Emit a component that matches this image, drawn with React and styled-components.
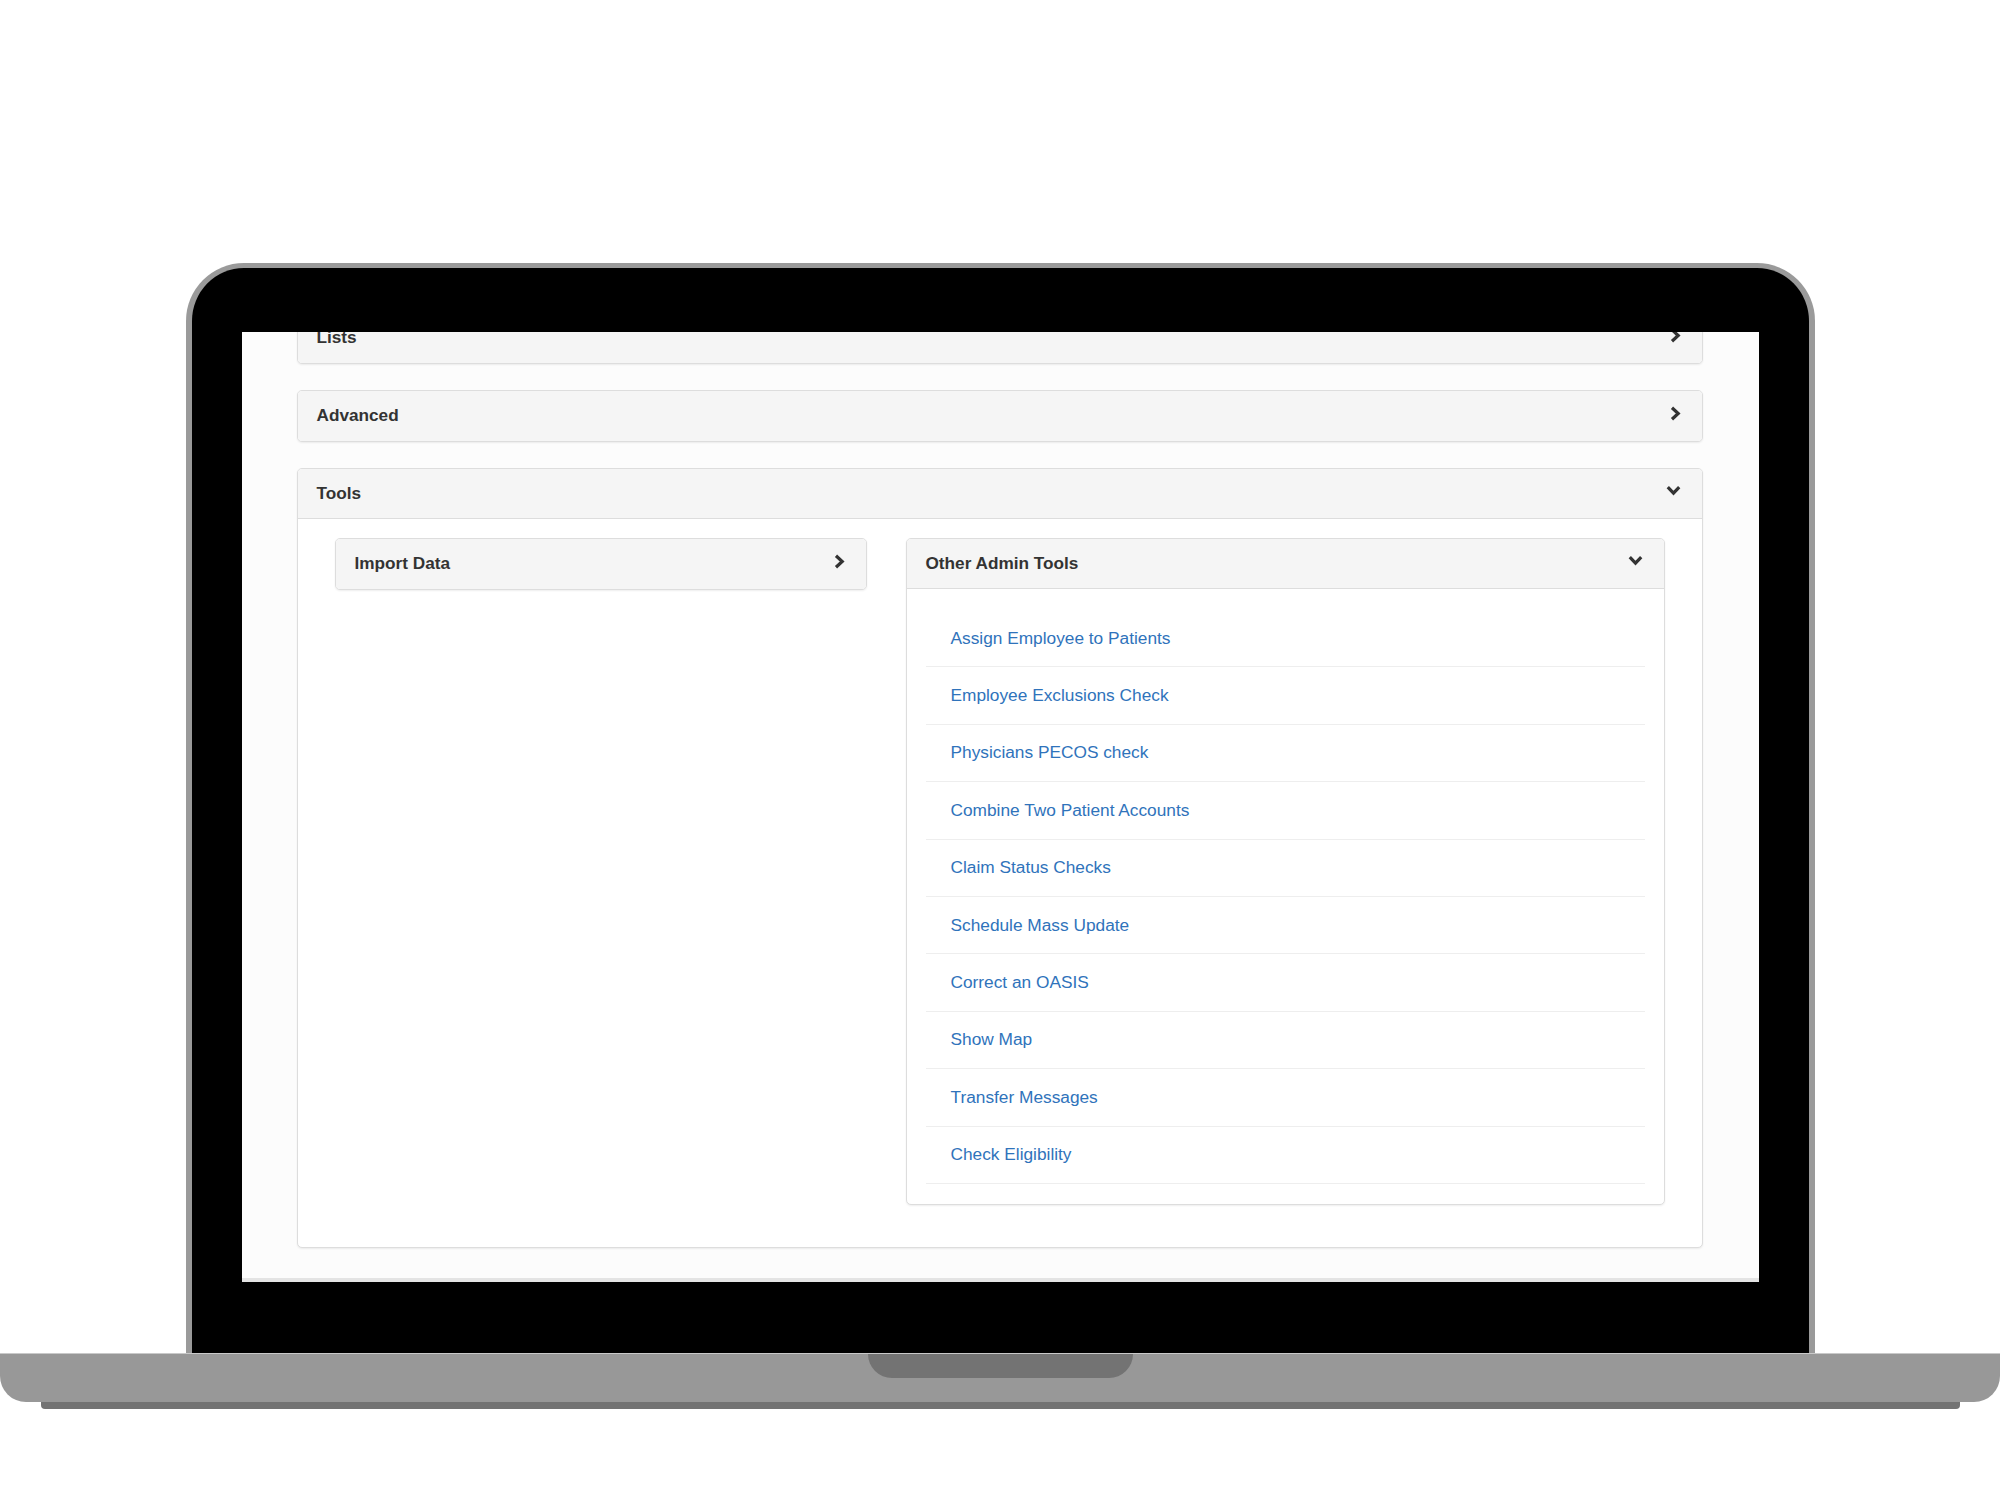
import React from "react";
import styled, { createGlobalStyle } from "styled-components";

const GlobalStyle = createGlobalStyle`
  * { box-sizing: border-box; }
  html, body {
    margin: 0;
    padding: 0;
    background: #ffffff;
    font-family: "Liberation Sans", Arial, sans-serif;
  }
`;

const Page = styled.div`
  width: 2000px;
  height: 1500px;
  padding-top: 263px;
  display: flex;
  flex-direction: column;
  align-items: center;
  overflow: hidden;
`;

const Lid = styled.div`
  width: 1629px;
  background: #000;
  border: 6px solid #9a9a9a;
  border-top-width: 5px;
  border-bottom: 0;
  border-radius: 58px 58px 0 0;
  padding: 64px 50px 71px;
`;

const Screen = styled.div`
  height: 950px;
  background: #fcfcfc;
  border-bottom: 4px solid #e4e4e4;
  overflow: hidden;
`;

const Content = styled.div`
  padding: 0 56px 0 55px;
`;

const Base = styled.div`
  width: 2000px;
  height: 49px;
  background: #989898;
  border-top: 1px solid #c9c9c9;
  border-radius: 0 0 26px 26px;
  display: flex;
  justify-content: center;
`;

const Notch = styled.div`
  width: 265px;
  height: 24px;
  background: #737373;
  border-radius: 0 0 24px 24px;
`;

const Foot = styled.div`
  width: 1919px;
  height: 7px;
  background: #737373;
  border-radius: 0 0 4px 4px;
`;

const Panel = styled.div`
  background: #fff;
  border: 1px solid #dddddd;
  border-radius: 5px;
  box-shadow: 0 1px 2px rgba(0, 0, 0, 0.07);
  margin-bottom: ${({ $mb }) => ($mb !== undefined ? $mb : 26)}px;
  margin-top: ${({ $mt }) => $mt || 0}px;
  overflow: hidden;
`;

const Heading = styled.div`
  height: 50px;
  padding: 0 21px 0 19px;
  background: #f5f5f5;
  border-bottom: 1px solid ${({ $open }) => ($open ? "#dddddd" : "transparent")};
  display: flex;
  align-items: center;
  justify-content: space-between;
  color: #333;
  font-size: 17.2px;
  font-weight: bold;
`;

const IconWrap = styled.span`
  display: flex;
  margin-top: -5px;
`;

const ToolsBody = styled.div`
  padding: 19px 37px 42px 37px;
  display: grid;
  grid-template-columns: 532px 759px;
  column-gap: 39px;
  align-items: start;
`;

const LinkList = styled.ul`
  list-style: none;
  margin: 0;
  padding: 21px 19px 20px 19px;
`;

const LinkItem = styled.li`
  height: 57.4px;
  display: flex;
  align-items: center;
  padding-left: 25px;
  border-bottom: 1px solid #eeeeee;
`;

const ToolLink = styled.a`
  color: #2f73bb;
  font-size: 17.3px;
  text-decoration: none;
`;

const ChevronRight = () => (
  <svg width="11" height="15" viewBox="0 0 11 15">
    <path d="M2 1.8 L8.2 7.5 L2 13.2" fill="none" stroke="#333" strokeWidth="3.2" />
  </svg>
);

const ChevronDown = () => (
  <svg width="15" height="12" viewBox="0 0 15 12">
    <path d="M1.8 2.2 L7.5 8.2 L13.2 2.2" fill="none" stroke="#333" strokeWidth="3.2" />
  </svg>
);

const links = [
  "Assign Employee to Patients",
  "Employee Exclusions Check",
  "Physicians PECOS check",
  "Combine Two Patient Accounts",
  "Claim Status Checks",
  "Schedule Mass Update",
  "Correct an OASIS",
  "Show Map",
  "Transfer Messages",
  "Check Eligibility",
];

const PanelHead = ({ title, open }) => (
  <Heading $open={open}>
    <span>{title}</span>
    <IconWrap>{open ? <ChevronDown /> : <ChevronRight />}</IconWrap>
  </Heading>
);

export default function App() {
  return (
    <>
      <GlobalStyle />
      <Page>
        <Lid>
          <Screen>
            <Content>
              <Panel $mt={-20}>
                <PanelHead title="Lists" />
              </Panel>
              <Panel>
                <PanelHead title="Advanced" />
              </Panel>
              <Panel>
                <PanelHead title="Tools" open />
                <ToolsBody>
                  <Panel $mb={0}>
                    <PanelHead title="Import Data" />
                  </Panel>
                  <Panel $mb={0}>
                    <PanelHead title="Other Admin Tools" open />
                    <LinkList>
                      {links.map((l) => (
                        <LinkItem key={l}>
                          <ToolLink href="#">{l}</ToolLink>
                        </LinkItem>
                      ))}
                    </LinkList>
                  </Panel>
                </ToolsBody>
              </Panel>
            </Content>
          </Screen>
        </Lid>
        <Base>
          <Notch />
        </Base>
        <Foot />
      </Page>
    </>
  );
}
